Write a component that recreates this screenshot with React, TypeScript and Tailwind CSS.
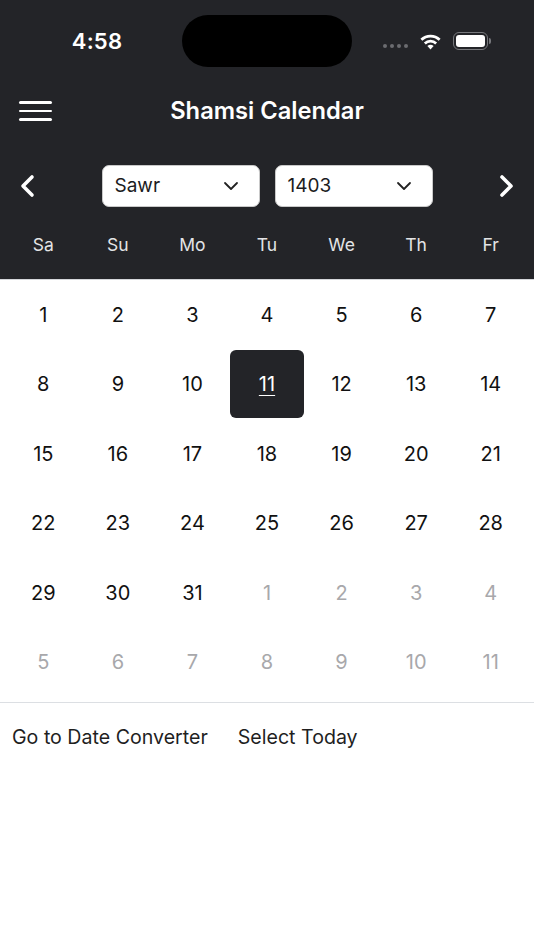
import React from "react";

const WEEK_DAYS = ["Sa", "Su", "Mo", "Tu", "We", "Th", "Fr"];

type Day = { n: number; muted?: boolean; selected?: boolean };

const buildDays = (): Day[] => {
  const days: Day[] = [];
  for (let i = 1; i <= 31; i++) days.push({ n: i, selected: i === 11 });
  for (let i = 1; i <= 11; i++) days.push({ n: i, muted: true });
  return days;
};

const ChevronDown = () => (
  <svg width="16" height="10" viewBox="0 0 16 10" fill="none">
    <polyline points="2,2 8,8 14,2" stroke="#222" strokeWidth="1.8" strokeLinecap="round" strokeLinejoin="round" />
  </svg>
);

const NavChevron = ({ dir }: { dir: "left" | "right" }) => (
  <svg width="18" height="24" viewBox="0 0 18 24" fill="none">
    <polyline
      points={dir === "left" ? "13,3 4,12 13,21" : "5,3 14,12 5,21"}
      stroke="white"
      strokeWidth="3.6"
      strokeLinecap="round"
      strokeLinejoin="round"
    />
  </svg>
);

const Select = ({ value }: { value: string }) => (
  <div className="w-[158px] h-[42px] bg-white rounded-[7px] border border-[#c9c9c9] flex items-center justify-between pl-[12px] pr-[20px]">
    <span className="text-[19px] text-[#1c1c1e]">{value}</span>
    <ChevronDown />
  </div>
);

const StatusBar = () => (
  <div className="h-[80px] flex items-start pt-[15px]">
    <div className="w-[182px] h-[52px] flex items-center justify-center pl-[12px]">
      <span className="text-[22px] font-semibold text-white tracking-[0.2px]">4:58</span>
    </div>
    <div className="w-[170px] h-[52px] rounded-full bg-black" />
    <div className="flex-1 h-[52px] flex items-center pl-[31px] gap-[11px]">
      <div className="flex gap-[3px] mt-[10px]">
        {[0, 1, 2, 3].map((i) => (
          <span key={i} className="w-[4px] h-[4px] rounded-full bg-[#6b6c70]" />
        ))}
      </div>
      <svg width="23" height="17" viewBox="0 0 23 17">
        <path d="M11.5 16.5 L8.4 13.1 A4.6 4.6 0 0 1 14.6 13.1 Z" fill="white" />
        <path d="M4.9 9.5 A9.4 9.4 0 0 1 18.1 9.5 L16.2 11.5 A6.7 6.7 0 0 0 6.8 11.5 Z" fill="white" />
        <path d="M1.4 5.8 A14.4 14.4 0 0 1 21.6 5.8 L19.7 7.8 A11.7 11.7 0 0 0 3.3 7.8 Z" fill="white" />
      </svg>
      <div className="flex items-center">
        <div className="w-[35px] h-[18px] rounded-[6px] border-[1.5px] border-[#77787c] p-[2px]">
          <div className="w-full h-full rounded-[3px] bg-white" />
        </div>
        <div className="w-[2px] h-[6px] rounded-r-full bg-[#77787c] ml-[1px]" />
      </div>
    </div>
  </div>
);

export default function App() {
  const days = buildDays();

  return (
    <div className="w-[534px] h-[950px] bg-white" style={{ fontFamily: "Inter, 'Noto Sans', sans-serif" }}>
      <div className="bg-[#232428] border-b border-[#d4d6da]">
        <StatusBar />
        <div className="h-[62px] flex items-center">
          <div className="w-[70px] flex justify-center">
            <div className="flex flex-col gap-[6px] w-[33px]">
              <span className="h-[2.6px] bg-white rounded-full" />
              <span className="h-[2.6px] bg-white rounded-full" />
              <span className="h-[2.6px] bg-white rounded-full" />
            </div>
          </div>
          <h1 className="flex-1 text-center text-white text-[23.7px] font-semibold pr-[70px]">Shamsi Calendar</h1>
        </div>
        <div className="h-[88px] flex items-center">
          <div className="w-[56px] flex justify-center">
            <NavChevron dir="left" />
          </div>
          <div className="flex-1 flex justify-center gap-[15px]">
            <Select value="Sawr" />
            <Select value="1403" />
          </div>
          <div className="w-[56px] flex justify-center">
            <NavChevron dir="right" />
          </div>
        </div>
        <div className="grid grid-cols-7 px-[6px] h-[30px] items-center mb-[19px]">
          {WEEK_DAYS.map((d) => (
            <span key={d} className="text-center text-[17.5px] text-[#e4e4e6]">
              {d}
            </span>
          ))}
        </div>
      </div>

      <div className="grid grid-cols-7 px-[6px] pb-[5px] border-b border-[#dcdfe3]">
        {days.map((d, i) => (
          <div key={i} className="h-[69.5px] flex items-center justify-center">
            {d.selected ? (
              <div className="w-full h-[68px] bg-[#232428] rounded-[6px] flex items-center justify-center">
                <span className="text-[20px] text-white underline underline-offset-[4px] decoration-[1px]">{d.n}</span>
              </div>
            ) : (
              <span className={`text-[20px] ${d.muted ? "text-[#a8a8ab]" : "text-[#111]"}`}>{d.n}</span>
            )}
          </div>
        ))}
      </div>

      <div className="flex items-center gap-[30px] pl-[12px] h-[70px]">
        <span className="text-[19.6px] text-[#1f1f1f]">Go to Date Converter</span>
        <span className="text-[19.6px] text-[#1f1f1f]">Select Today</span>
      </div>
    </div>
  );
}
